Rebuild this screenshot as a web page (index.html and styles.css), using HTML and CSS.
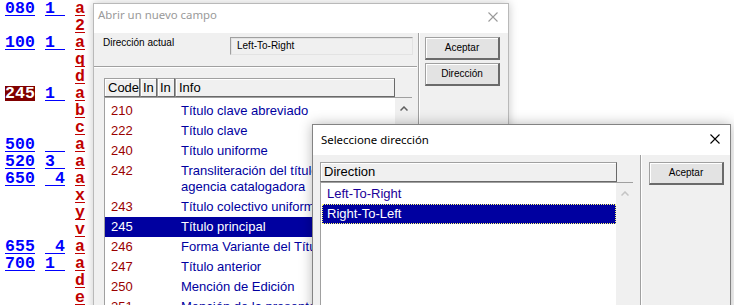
FILE: index.html
```html
<!DOCTYPE html>
<html lang="es">
<head>
<meta charset="utf-8">
<title>MARC</title>
<link rel="stylesheet" href="styles.css">
</head>
<body>
<div class="marc">
  <div class="mrow"><span class="tag u">080</span><span class="ind u">1 </span><span class="sub u">a</span></div>
  <div class="mrow"><span class="tag"></span><span class="ind"></span><span class="sub u">2</span></div>
  <div class="mrow"><span class="tag u">100</span><span class="ind u">1 </span><span class="sub u">a</span></div>
  <div class="mrow"><span class="tag"></span><span class="ind"></span><span class="sub u">q</span></div>
  <div class="mrow"><span class="tag"></span><span class="ind"></span><span class="sub u">d</span></div>
  <div class="mrow"><span class="tag hl">245</span><span class="ind u">1 </span><span class="sub u">a</span></div>
  <div class="mrow"><span class="tag"></span><span class="ind"></span><span class="sub u">b</span></div>
  <div class="mrow"><span class="tag"></span><span class="ind"></span><span class="sub u">c</span></div>
  <div class="mrow"><span class="tag u">500</span><span class="ind u">  </span><span class="sub u">a</span></div>
  <div class="mrow"><span class="tag u">520</span><span class="ind u">3 </span><span class="sub u">a</span></div>
  <div class="mrow"><span class="tag u">650</span><span class="ind u"> 4</span><span class="sub u">a</span></div>
  <div class="mrow"><span class="tag"></span><span class="ind"></span><span class="sub u">x</span></div>
  <div class="mrow"><span class="tag"></span><span class="ind"></span><span class="sub u">y</span></div>
  <div class="mrow"><span class="tag"></span><span class="ind"></span><span class="sub u">v</span></div>
  <div class="mrow"><span class="tag u">655</span><span class="ind u"> 4</span><span class="sub u">a</span></div>
  <div class="mrow"><span class="tag u">700</span><span class="ind u">1 </span><span class="sub u">a</span></div>
  <div class="mrow"><span class="tag"></span><span class="ind"></span><span class="sub u">d</span></div>
  <div class="mrow"><span class="tag"></span><span class="ind"></span><span class="sub u">e</span></div>
</div>

<div class="dlg dlg1">
  <div class="tbar">
    <span class="ttl">Abrir un nuevo campo</span>
    <svg class="close" width="10" height="10" viewBox="0 0 10 10"><path d="M0.5 0.5L9.5 9.5M9.5 0.5L0.5 9.5" /></svg>
  </div>
  <div class="dbody">
    <div class="lpane lpane1">
      <div class="curdir">
        <span class="lbl">Dirección actual</span>
        <div class="tbox">Left-To-Right</div>
      </div>
      <div class="hsep"></div>
      <div class="lvhead lvhead1">
        <span class="hc hc-code">Code</span><span class="hc hc-in">In</span><span class="hc hc-in2">In</span><span class="hc hc-info">Info</span>
      </div>
      <div class="lvbox lvbox1">
        <div class="rows rows1">
          <div class="r"><span class="code">210</span><span class="info">Título clave abreviado</span></div>
          <div class="r"><span class="code">222</span><span class="info">Título clave</span></div>
          <div class="r"><span class="code">240</span><span class="info">Título uniforme</span></div>
          <div class="r"><span class="code">242</span><span class="info">Transliteración del título por la<br>agencia catalogadora</span></div>
          <div class="r"><span class="code">243</span><span class="info">Título colectivo uniforme</span></div>
          <div class="r sel"><span class="code">245</span><span class="info">Título principal</span></div>
          <div class="r"><span class="code">246</span><span class="info">Forma Variante del Título</span></div>
          <div class="r"><span class="code">247</span><span class="info">Título anterior</span></div>
          <div class="r"><span class="code">250</span><span class="info">Mención de Edición</span></div>
          <div class="r"><span class="code">251</span><span class="info">Mención de la presentación musical</span></div>
        </div>
        <div class="vscroll">
          <svg class="chev" width="8" height="5" viewBox="0 0 8 5"><path d="M0.5 4.5L4 1L7.5 4.5" /></svg>
        </div>
      </div>
    </div>
    <div class="vsep"></div>
    <div class="rpane rpane1">
      <div class="btn">Aceptar</div>
      <div class="btn">Dirección</div>
    </div>
  </div>
</div>

<div class="dlg dlg2">
  <div class="tbar">
    <span class="ttl">Seleccione dirección</span>
    <svg class="close" width="10" height="10" viewBox="0 0 10 10"><path d="M0.5 0.5L9.5 9.5M9.5 0.5L0.5 9.5" /></svg>
  </div>
  <div class="dbody">
    <div class="lpane lpane2">
      <div class="lvhead lvhead2"><span class="hc hc-dir">Direction</span></div>
      <div class="lvbox lvbox2">
        <div class="rows rows2">
          <div class="r"><span class="dirtxt">Left-To-Right</span></div>
          <div class="r sel focus"><span class="dirtxt">Right-To-Left</span></div>
        </div>
        <div class="vscroll">
          <svg class="chev" width="8" height="5" viewBox="0 0 8 5"><path d="M0.5 4.5L4 1L7.5 4.5" /></svg>
        </div>
      </div>
    </div>
    <div class="vsep"></div>
    <div class="rpane rpane2">
      <div class="btn">Aceptar</div>
    </div>
  </div>
</div>
</body>
</html>
```

FILE: styles.css
```css
* { box-sizing: border-box; }

html, body {
  margin: 0;
  padding: 0;
}

body {
  width: 734px;
  height: 305px;
  overflow: hidden;
  position: relative;
  background: #ffffff;
  font-family: "Liberation Sans", Arial, sans-serif;
}

/* ---------- MARC background listing ---------- */
.marc {
  padding-left: 5px;
  font-family: "Liberation Mono", "Courier New", monospace;
  font-weight: bold;
  font-size: 16.5px;
  line-height: 17px;
}

.mrow {
  display: flex;
  height: 17px;
}

.mrow span {
  display: block;
  height: 17px;
  white-space: pre;
  letter-spacing: 0.1px;
}

.tag { width: 30px; color: #0000ff; }
.ind { width: 20px; margin-left: 10px; color: #0000ff; }
.sub { width: 10px; margin-left: 10px; color: #c00000; }

.u {
  background: linear-gradient(currentColor, currentColor) 0 15px / 100% 1px no-repeat;
}

.tag.hl {
  color: #ffffff;
  background: linear-gradient(#800000, #800000) 0 1px / 100% 15px no-repeat;
}

/* ---------- Dialog windows ---------- */
.dlg {
  position: absolute;
  display: flex;
  flex-direction: column;
  background: #f0f0f0;
  overflow: hidden;
}

.dlg1 {
  left: 93px;
  top: 3px;
  width: 416px;
  height: 340px;
  border: 1px solid #b9b9b9;
  box-shadow: 0 0 9px rgba(0, 0, 0, 0.22);
}

.dlg2 {
  left: 312px;
  top: 124px;
  width: 419px;
  height: 240px;
  border: 1px solid #838383;
  box-shadow: 0 0 12px rgba(0, 0, 0, 0.28);
}

.tbar {
  display: flex;
  align-items: flex-start;
  height: 30px;
  flex: none;
  background: #ffffff;
}

.dlg1 .tbar { height: 29px; }

.ttl {
  font-family: "Noto Sans", "Open Sans", sans-serif;
  font-size: 11.4px;
  line-height: 16px;
  padding-left: 4px;
}

.dlg1 .ttl { color: #9a9a9a; padding-top: 3px; }
.dlg2 .ttl { color: #000000; padding-top: 7px; padding-left: 8px; }

.close {
  margin-left: auto;
  margin-right: 10px;
  fill: none;
  stroke-width: 1.1;
}

.dlg1 .close { margin-top: 8px; stroke: #9a9a9a; }
.dlg2 .close { margin-top: 9px; stroke: #000000; }

.dbody {
  display: flex;
  flex: 1;
  min-height: 0;
}

.lpane { flex: none; display: flex; flex-direction: column; }
.lpane1 { width: 324px; }
.lpane2 { width: 327px; padding-left: 7px; padding-top: 7px; }

.vsep {
  flex: none;
  width: 2px;
  border-left: 1px solid #a0a0a0;
  border-right: 1px solid #ffffff;
}

.rpane { display: flex; flex-direction: column; gap: 3px; }
.rpane1 { padding: 4px 0 0 5px; }
.rpane2 { padding: 7px 0 0 7px; }

.btn {
  width: 75px;
  height: 23px;
  font-size: 10px;
  line-height: 19px;
  text-align: center;
  color: #000000;
  background: #e3e3e3;
  border: 1px solid #a0a0a0;
  border-right: 2px solid #6a6a6a;
  border-bottom: 2px solid #6a6a6a;
  box-shadow: inset 1px 1px #ffffff;
}

/* current direction row */
.curdir {
  display: flex;
  align-items: flex-start;
  padding-top: 4px;
}

.lbl {
  width: 127px;
  margin-left: 9px;
  font-size: 10px;
  line-height: 12px;
  color: #000000;
}

.tbox {
  width: 183px;
  height: 18px;
  padding-left: 6px;
  font-size: 10px;
  line-height: 16px;
  color: #000000;
  background: #f0f0f0;
  border: 1px solid #a0a0a0;
  border-right-color: #e3e3e3;
  border-bottom-color: #e3e3e3;
  box-shadow: inset 1px 1px #e3e3e3;
}

.hsep {
  width: 323px;
  height: 2px;
  margin-top: 11px;
  border-top: 1px solid #a0a0a0;
  border-bottom: 1px solid #ffffff;
}

/* list view header */
.lvhead {
  display: flex;
  flex: none;
}

.lvhead1 { margin: 10px 0 0 10px; }

.hc {
  display: block;
  height: 19px;
  padding-left: 3px;
  font-size: 13px;
  line-height: 17px;
  color: #000000;
  background: #f0f0f0;
  border: 1px solid #a0a0a0;
  border-right-color: #696969;
  border-bottom-color: #696969;
  box-shadow: inset 1px 1px #ffffff;
  white-space: nowrap;
  overflow: hidden;
}

.hc-code { width: 36px; }
.hc-in { width: 17px; padding-left: 2px; }
.hc-in2 { width: 18px; padding-left: 2px; }
.hc-info { width: 220px; }
.hc-dir { width: 297px; height: 20px; line-height: 18px; }

/* list view box */
.lvbox {
  display: flex;
  flex: 1;
  background: #ffffff;
  border-top: 1px solid #a0a0a0;
  border-left: 1px solid #a0a0a0;
}

.lvbox1 { width: 308px; margin-left: 10px; }
.lvbox2 { width: 313px; }

.rows { flex: 1; min-width: 0; overflow: hidden; }
.rows1 { padding-top: 3px; }
.rows2 { padding-top: 1px; }

.r {
  display: flex;
  padding: 2px 0 2px 6px;
  font-size: 13px;
  line-height: 16px;
  white-space: nowrap;
}

.rows2 .r { padding-left: 5px; margin-left: 1px; }

.code { width: 70px; flex: none; color: #990000; }
.info { color: #0000a0; }
.dirtxt { color: #1a0099; }

.r.sel { background: #0000a0; }
.r.sel .code, .r.sel .info, .r.sel .dirtxt { color: #ffffff; }
.r.focus { outline: 1px dotted #ffff70; outline-offset: -1px; }

.vscroll {
  flex: none;
  width: 17px;
  background: #f0f0f0;
  display: flex;
  justify-content: center;
  align-items: flex-start;
  padding-top: 8px;
}

.chev { fill: none; stroke-width: 1.5; }
.lvbox1 .chev { stroke: #606060; }
.lvbox2 .chev { stroke: #c4c4c4; }
```
